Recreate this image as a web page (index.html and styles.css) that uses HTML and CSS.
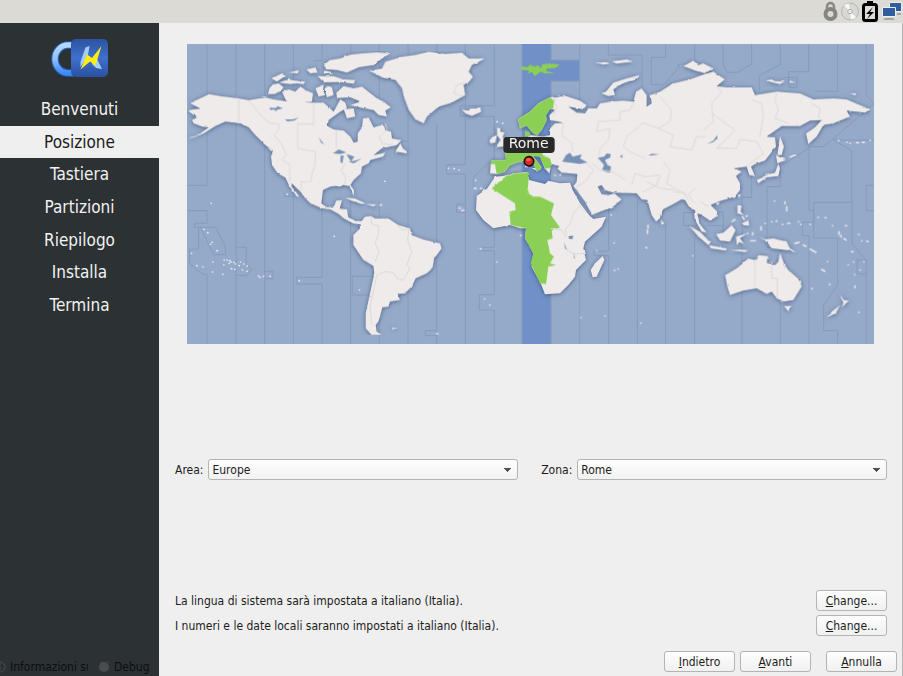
FILE: index.html
```html
<!DOCTYPE html>
<html lang="it">
<head>
<meta charset="utf-8">
<title>Posizione</title>
<link rel="stylesheet" href="styles.css">
</head>
<body>
<header class="panel">
  <svg class="tray" viewBox="0 0 80 23" aria-hidden="true">
    <path d="M5 10V6.500a3.500 3.500 0 0 1 7 0V10" fill="none" stroke="#898986" stroke-width="2.500"/>
    <circle cx="8.500" cy="14" r="5" fill="none" stroke="#858583" stroke-width="4"/>
    <circle cx="28" cy="11.500" r="8.500" fill="#d7d7d5" stroke="#b4b4b2"/>
    <path d="M28 11.500 22 5.500a8 8 0 0 1 5-2ZM28 11.500l6 6a8 8 0 0 1-5 2Z" fill="#f8f8f8"/>
    <circle cx="28" cy="11.500" r="2.200" fill="#eee" stroke="#aaa"/>
    <rect x="41.500" y="4.500" width="13" height="16" rx="2" fill="#dddcd5" stroke="#000" stroke-width="3"/>
    <path d="M45 1h6v4h-6z"/>
    <path d="m51 7-7 7h4l-3 5 7-7h-4z"/>
    <path d="M67.500 2.500h12v9h-12z" fill="#2f5d9f" stroke="#eee"/>
    <path d="M60.500 7.500h13v9h-13z" fill="#2f5d9f" stroke="#eee"/>
    <path d="M63 18h8l2 2H61zM75 13h4v2h-4z" fill="#a4a4a8"/>
  </svg>
</header>
<div class="window">
  <aside class="sidebar">
    <svg class="logo" viewBox="0 0 60 40" role="img" aria-label="Logo">
      <defs>
        <linearGradient id="ring" x2="0" y2="1"><stop stop-color="#b4d8ff"/><stop offset=".5" stop-color="#8fc1fb"/><stop offset="1" stop-color="#3c8cf5"/></linearGradient>
        <linearGradient id="tile" x2="0" y2="1"><stop stop-color="#2c539f"/><stop offset=".5" stop-color="#3e70cc"/><stop offset="1" stop-color="#2b50a0"/></linearGradient>
      </defs>
      <path d="M24 7h-6a13 14 0 0 0 0 28h6" fill="none" stroke="#2a5cb8" stroke-width="7.500"/>
      <path d="M24 7h-6a13 14 0 0 0 0 28h6" fill="none" stroke="url(#ring)" stroke-width="5.500"/>
      <rect x="21" y="1" width="37" height="38" rx="5" fill="url(#tile)"/>
      <path d="M35.500 9.500 39.500 8 38 17 34 24l-3.500 5V24ZM43 20l3-1 6 12-6-1-4-4Z" fill="#a5cdf5"/>
      <path d="M51.500 8 42 20l-5-3.500L30.500 31.500 40 23.500 45.500 27.500Z" fill="#ffee14"/>
    </svg>
    <nav class="steps">
      <span>Benvenuti</span><span class="current" aria-current="step">Posizione</span><span>Tastiera</span><span>Partizioni</span><span>Riepilogo</span><span>Installa</span><span>Termina</span>
    </nav>
    <div class="sidebar-foot">
      <button class="info"><svg viewBox="0 0 12 12" aria-hidden="true"><circle cx="6" cy="6" r="5" fill="none" stroke="#4a4e50"/><path d="M6 5v4M6 2v2" stroke="#4a4e50"/></svg><span>Informazioni su</span></button>
      <button class="debug"><svg viewBox="0 0 12 12" aria-hidden="true"><circle cx="6" cy="6" r="5" fill="#4b4b4b"/><path d="M2 2h2M9 1h2" stroke="#4b4b4b"/></svg><span>Debug</span></button>
    </div>
  </aside>
  <main class="page">
    <div class="map-area">
    <svg class="map" viewBox="0 0 2061 900" role="img" aria-label="Mappa dei fusi orari">
      <defs>
        <filter id="coast" x="0" y="0" width="100%" height="100%" color-interpolation-filters="sRGB">
          <feTurbulence type="fractalNoise" baseFrequency=".06" numOctaves="1" seed="4" result="n"/>
          <feDisplacementMap in="SourceGraphic" in2="n" scale="7" xChannelSelector="R" yChannelSelector="G"/>
        </filter>
        <filter id="shade" x="0" y="0" width="100%" height="100%" color-interpolation-filters="sRGB">
          <feDropShadow dx="0" dy="2" stdDeviation="6" flood-color="#1e355f" flood-opacity=".65"/>
        </filter>
      </defs>
      <path d="M0 0h2061v900H0z" fill="#95a9c9"/>
      <path d="M1005 0h87v48h86v63h-86v789h-87z" fill="#7090c7"/>
      <g class="zones">
        <path d="M60 0V424H0M0 500H60V538H23V550H86L115 608V632H80L40 550M35 550V615H8V658L48 691H60V900M147 0V900M147 610H178V660L194 675 180 694H147M233 0V900M233 682H258V704H233M319 0V900M293 446V457H319M405 50V0M380 50H405M405 438V700H328V720H405V900M491 0V60M491 470V900M491 697H560V753H496V697M577 0V190M577 470V560M577 770V900M663 0V900M663 292H643M749 0V120M749 240V900M749 860H715V875H749M835 0V362H779V390H835V900M835 505H808V481H835M922 0V185H820V217H922V610H878V620H922V752H877V798H922V900M922 217V340L859 400V438M1005 0V900M1092 0V48H1178V111H1092V170M1092 745V900M1178 0V200M1178 690V900M1265 490V621H1221V635H1265V900M1264 0V33H1365V150M1393 122V40H1436V0M1393 122H1430L1475 72V60H1523V0M1351 470V900M1436 545V900M1523 580V900M1608 0V60L1620 85H1652L1694 60V0M1780 0V62L1717 95V145M1865 0V83H1805V130H1830V100H1790M1952 0V142H1885M2038 0V155L2061 180L1910 308H1870M1870 308L1785 365M1780 365V428H1740V610H1780V900M1866 300V500M1866 500H1880V535H1846V575H1866V900M1940 288L1994 320V475H1880V582H1952V723L1910 783V860H1952V900M1995 475V600L2038 648V900M2061 424H2038V500H2061M2038 648H2010V690H2038M1694 305V460H1665V900M1490 506H1530V545H1490ZM1555 504H1609V545H1560M1609 540V580M1940 288H2061"/>
      </g>
      <g filter="url(#shade)"><g class="land" filter="url(#coast)">
        <g transform="translate(0 -12)">
          <path d="M4 212 20 208 40 206 10 190 28 180 66 162 100 168 150 174 185 180 235 172 260 178 300 184 330 186 380 188 410 188 440 215 460 178 475 188 480 204 460 215 425 240 422 258 440 268 470 272 490 290 500 308 512 305 512 280 525 262 528 235 545 233 560 262 590 253 595 270 612 275 615 295 643 300 630 315 585 325 560 345 595 338 588 350 550 360 545 370 525 380 522 400 500 420 490 435 501 450 500 468 488 438 470 435 430 440 408 450 403 490 420 502 440 500 448 482 465 480 458 506 480 508 484 532 505 542 530 545 528 555 498 550 470 535 455 522 430 508 405 505 370 490 355 475 340 455 314 430 312 437 337 470 330 470 308 440 295 413 272 400 255 375 252 350 258 330 235 315 205 285 185 262 160 250 115 245 85 258 50 280 20 292 0 299 40 280 65 262 45 260 20 250 15 240 30 232 10 218Z"/>
          <path d="M247 145 258 133 275 130 290 142 280 155 262 162 243 162ZM285 155 305 148 325 155 340 140 360 152 378 160 375 185 345 188 330 192 305 190 295 178ZM253 115 285 100 298 105 280 118 270 125ZM275 128 305 118 325 122 355 125 350 132 330 130 310 132ZM305 98 335 90 333 100ZM358 88 385 82 392 98 370 100ZM385 145 410 134 408 150 415 165 395 170ZM410 75 428 60 460 55 490 44 525 40 570 37 610 40 585 56 560 75 515 82 480 98 450 90 420 88ZM392 108 440 108 470 118 505 120 500 131 460 126 410 127ZM412 92 430 95 435 103 410 100ZM412 145 425 138 435 142 440 165 420 172ZM448 158 470 138 500 145 525 140 570 175 590 185 612 202 595 212 600 230 575 225 560 210 530 205 490 195 520 185 490 172 450 174ZM470 207 500 205 505 230 480 235ZM625 335 640 310 648 325 660 335 658 340ZM240 320 260 330 252 333Z"/>
        </g>
        <g transform="translate(525 -12)">
          <path d="M22 92 60 85 70 65 120 50 160 45 200 35 250 42 300 38 320 55 368 55 350 66 330 75 320 95 333 110 322 125 305 135 310 165 270 188 230 200 195 230 185 250 160 238 140 210 125 170 120 145 100 120 60 112ZM300 208 320 212 325 205 355 205 358 215 330 228 310 220ZM405 262 415 265 415 275 428 277 422 290 435 318 400 322 415 300 405 285ZM382 300 392 290 405 285 400 308 385 310Z"/>
        </g>
        <g transform="translate(1029 -12)">
          <path d="M-117 362-72 360-75 335-55 322-20 300 0 285 40 290 60 285 60 265 75 250 100 248 60 240 58 225 75 210 60 205 48 225 50 240 35 270 22 285 10 280-10 257-30 264-36 238 0 215 25 190 60 172 100 165 150 182 170 195 160 208 115 200 140 218 165 220 175 205 200 205 210 190 240 185 280 182 310 185 318 155 335 145 350 165 350 200 365 190 362 165 390 155 430 130 480 118 515 105 550 95 585 118 560 138 590 142 665 142 675 165 740 155 810 160 850 178 910 175 950 178 990 195 1023 208 1005 218 950 212 960 230 910 250 880 255 860 290 835 312 828 280 855 262 875 240 840 242 810 258 755 258 710 290 735 292 738 320 705 362 675 372 663 380 675 408 658 405 650 380 615 385 635 395 618 408 630 430 630 450 615 470 565 485 542 495 562 515 560 530 540 542 515 525 502 520 508 550 530 578 515 575 498 545 495 510 480 505 465 480 455 478 430 492 395 510 390 535 378 545 365 525 352 480 335 478 320 460 250 458 225 450 215 435 203 440 215 462 235 465 253 460 275 478 250 500 185 525 165 485 130 440 140 425 142 402 95 398 82 386 88 378 65 372 58 400 44 385 30 350 8 347 35 382 20 395 10 370-15 362-40 368-60 375-75 395-100 402-120 400Z"/>
          <path d="M214 160 228 155 250 128 290 115 328 105 325 113 280 130 250 148 255 165 235 168ZM460 78 490 62 505 75 520 70 550 85 525 100 495 92ZM195 68 230 66 240 71 220 74ZM245 64 290 58 310 65 260 71ZM710 122 725 118 735 123 765 125 750 132 730 128ZM780 122 798 128 778 128ZM960 160 980 160 975 166Z"/>
        </g>
        <g transform="translate(1539 -12)"><path d="M170 420 205 402 225 398 235 372 240 385 235 408 200 412 175 430ZM228 345 258 360 232 370ZM240 288 252 320 245 345 232 345Z"/></g>
        <g transform="translate(474 438)"><path d="M44 100 60 80 78 78 90 85 130 85 160 105 195 115 200 135 235 148 285 160 290 175 268 205 262 235 245 250 212 265 200 290 180 310 158 312 165 330 135 335 130 350 112 352 105 380 100 395 92 405 95 425 112 435 80 435 62 415 62 370 75 310 88 250 85 228 55 210 25 165 25 135 45 115ZM0 23 30 25 62 40 50 42 20 32ZM65 42 95 43 85 49ZM142 412 160 415 142 417Z"/></g>
        <g transform="translate(849 348)"><path d="M20 108 52 85 75 50 100 48 130 40 172 36 178 60 225 72 235 62 270 70 300 68 308 90 330 130 360 168 370 177 408 170 395 200 345 245 340 265 348 300 318 330 315 350 295 375 270 400 225 403 212 370 185 320 190 280 165 235 168 205 150 205 120 195 70 205 40 180 18 150ZM398 288 403 300 380 350 368 352 362 330 375 310ZM165 12 174 12 174 22 165 22ZM185 24 205 24 202 34Z"/></g>
        <g transform="translate(1359 408)"><path d="M255 285 290 265 325 235 345 240 355 225 385 228 380 245 405 255 415 245 420 218 432 250 445 270 480 300 485 320 460 360 430 365 410 355 395 335 380 342 350 325 310 332 270 345 262 320ZM432 378 455 378 445 394ZM598 343 612 360 627 362 605 382 610 368ZM600 376 587 400 560 412 575 395ZM355 168 375 178 400 175 440 185 450 205 468 217 440 210 395 205 380 185ZM228 162 250 158 275 135 287 150 270 185 240 182ZM148 138 180 155 212 188 205 195 175 170ZM208 195 260 205 258 212 212 205ZM288 170 322 160 300 174 312 192 298 186 290 196ZM292 75 305 77 302 95 312 106 292 100ZM305 130 325 120 328 137 312 136ZM62 118 73 130 65 137ZM294 43 302 43 296 56ZM227 68 240 66 233 76ZM270 210 300 209 325 210 315 216Z"/></g>
      </g></g>
      <g class="local" filter="url(#coast)">
        <g transform="translate(1029 -12)">
          <path d="M-117 362-72 360-75 340-55 332-20 300 36 290 38 345 60 355 65 372 63 385 44 385 30 350 8 347 35 382 20 395 10 370-15 362-40 368-60 375-75 395-100 402-105 372-117 372ZM-36 238 0 215 25 190 60 172 72 182 70 205 60 208 48 225 50 240 35 270 22 285 10 280-10 257-30 264ZM-15 272 0 277 0 288-15 290Z"/>
          <path d="M0 74 14 80 24 76 34 84 36 74 60 70 90 74 75 84 50 86 48 93 76 100 44 100 32 95 14 108 6 96-8 100-2 92-28 88-24 78-8 82Z"/>
        </g>
        <path transform="translate(849 348)" d="M65 85 108 48 130 40 178 38 172 98 190 110 210 110 252 130 243 165 270 203 245 210 248 235 232 240 240 280 252 290 240 310 258 315 235 320 228 372 210 370 182 310 190 280 165 235 168 205 122 195 118 155 137 150 135 130Z"/>
      </g>
      <g class="water">
        <g transform="translate(0 -12)"><path d="M248 203 268 204 270 198 288 205 272 209 265 214 262 208 250 210ZM295 238 318 238 335 232 322 242 300 244ZM395 292 412 314 402 308ZM438 340 455 328 478 337 460 342ZM461 347 470 347 466 371 460 365ZM478 342 502 350 492 365ZM485 365 505 362 525 355 500 370Z"/></g>
        <g transform="translate(1029 -12)"><path d="M97 365 108 345 120 338 128 350 155 343 150 355 172 367 150 372 122 368ZM203 353 222 350 230 340 242 342 240 353 225 360 232 375 243 380 240 398 228 396 216 390 222 375ZM270 348 278 345 276 355ZM355 347 365 341 388 343 365 346ZM126 436 140 450 155 475 185 520 175 520 145 470Z"/></g>
        <path transform="translate(849 348)" d="M296 228 310 227 307 238 297 237ZM281 245 291 269 286 266ZM311 275 315 296 312 294Z"/>
        <path transform="translate(1539 -12)" d="M22 311 40 302 52 285 52 296 38 307Z"/>
      </g>
      <g class="borders">
        <path transform="translate(0 -12)" d="M155 175V250M185 182 205 205 225 230 250 250 275 250 275 270 262 285 285 315 298 345 285 360 308 372V425M380 190V252H332V325L385 335V375L375 400 372 425H342V450M448 272V325M475 370 462 390 475 410V435"/>
        <path transform="translate(525 -12)" d="M70 250 75 270 52 290 60 310 95 315M310 128 285 135 275 160 305 170"/>
        <path transform="translate(1029 -12)" d="M72 172 80 205 70 225M100 250 95 285 125 310 128 335M312 185 300 210 270 215 270 240 205 245 200 275 240 265 235 300 210 325 208 345M390 170 425 210 420 245 385 265 340 248 290 290 280 320 300 335 345 355M385 265 430 285 420 320 485 330 500 290 525 290M185 370 210 390 250 395 285 420M305 435 315 400 345 410 390 405 380 435 340 455M400 365 420 390 410 430 470 465M170 370 190 390 165 425 135 445M560 140 575 155 545 190 550 245 520 270M545 220 615 270 560 325 620 325 630 298 680 305 700 340 650 380M665 180 695 190 700 225 690 290M740 158 735 180 745 210 735 235 775 250M845 190 870 205 865 235"/>
        <path transform="translate(474 438)" d="M78 85 80 102 102 108 100 135 90 158 102 185 90 215M155 105 175 120 192 118 188 150 200 185 185 225 195 235 175 270 158 268 145 248 120 245 95 255 88 290 75 350 80 405"/>
        <path transform="translate(849 348)" d="M330 135 310 160 300 190 285 210 290 225M325 135 360 170M242 205 275 210 290 235M290 270 312 282 345 280"/>
        <path transform="translate(1359 408)" d="M344 240V324M395 245V295H412V355M100 35 130 38 145 60M165 25 145 45 160 65M20 5 60 25 105 30M180 65 205 80"/>
      </g>
      <g class="specks">
        <path transform="translate(0 438)" d="M72 40h1M50 118h1M62 128h1M75 157h1M70 163h1M90 182h1M13 190h1M29 227h1M47 231h1M77 216h1M76 246h1M107 253h1M111 210h1M120 210h1M128 212h1M132 216h1M140 217h1M126 220h1M110 225h1M145 222h1M160 216h1M156 227h1M170 222h1M180 228h1M133 236h1M143 238h1M166 240h1M180 244h1M214 258h1M219 262h1M229 259h1M249 259h1M336 272h1M441 139h1M517 300h1M300 13h1"/>
        <path transform="translate(849 348)" d="M16 61h1M12 85h6M31 85h4M152 226h1M31 266h1M80 306h1M43 417h1M59 435h1M380 272h1M432 249h1M433 331h1M444 327h1M332 473h1M405 468h1M512 489h1M423 165h1M529 263h1M255 46h1M270 45h1"/>
        <path transform="translate(1359 408)" d="M24 136v8M22 150v10M18 203h1M158 227h1M403 63h1M435 65v6M440 80v12M363 140v10M375 130h1M395 125h1M408 123h3M427 133h1M443 130h6M475 125h1M482 133h1M510 133h1M534 112h1M555 113h3M577 137h1M616 137h4M597 155v8M603 166v5M612 176l6 4M656 163h1M665 183h1M680 184h4M634 215h6M624 254h1M640 246h1M660 270h1M671 245h1M643 284h1M645 318v5M656 397h1M568 313h1M515 325h1M545 268l10 6M562 245h1M465 190l12-3M490 195l8 4M510 207l18 10M332 182h14M322 160h1M285 118l-8 6M307 110l6 8M318 108h4M338 158v6"/>
        <path transform="translate(1539 -12)" d="M415 302h1M440 307h1M450 310h1M470 308h5M487 307h6M510 301h1M270 351l16-6"/>
        <path transform="translate(525 -12)" d="M259 385h1M276 386h1M291 390h1M68 424h1M405 245h1M422 250h1"/>
        <path transform="translate(474 438)" d="M342 54h4M350 61h6M406 176h1M275 431h4M105 45h5"/>
      </g>
      <g>
        <rect x="949" y="279" width="154" height="48" rx="11" fill="#292929"/>
        <text x="1025" y="312" text-anchor="middle" class="pin-label">Rome</text>
        <circle cx="1026" cy="352" r="14" fill="#e22624" stroke="#111" stroke-width="5"/>
        <ellipse cx="1024" cy="347" rx="7" ry="5" fill="#ff5a50"/>
      </g>
    </svg>
    </div>
    <form class="pickers">
      <label for="area">Area:</label>
      <select id="area"><option>Europe</option></select>
      <label for="zone" class="zone-label">Zona:</label>
      <select id="zone"><option>Rome</option></select>
    </form>
    <section class="locale">
      <div class="row"><p>La lingua di sistema sarà impostata a italiano (Italia).</p><button><u>C</u>hange...</button></div>
      <div class="row"><p>I numeri e le date locali saranno impostati a italiano (Italia).</p><button><u>C</u>hange...</button></div>
    </section>
    <footer class="actions"><button><u>I</u>ndietro</button><button><u>A</u>vanti</button><button class="cancel"><u>A</u>nnulla</button></footer>
  </main>
</div>
</body>
</html>
```
FILE: styles.css
```css
* { box-sizing: border-box; }
body {
  margin: 0;
  height: 100vh;
  display: flex;
  flex-direction: column;
  overflow: hidden;
  background: #efefef;
  color: #1c1c1c;
  font: 12px/14px "DejaVu Sans Condensed", "DejaVu Sans", sans-serif;
}
.panel {
  height: 23px;
  display: flex;
  justify-content: flex-end;
  background: #dbdad4;
}
.tray { width: 80px; height: 23px; margin-right: 1px; }
.window { flex: 1; display: flex; min-height: 0; border-right: 1px solid #b4b4b4; }
.sidebar {
  width: 159px;
  display: flex;
  flex-direction: column;
  background: #2c3133;
}
.logo { width: 60px; height: 40px; margin: 15px auto; flex: none; }
.steps {
  display: grid;
  grid-template-rows: repeat(7, 1fr);
  height: 228px;
  color: #f2f2f2;
  font-size: 17px;
  text-align: center;
}
.steps span { display: grid; place-items: center; }
.steps .current { background: #efefef; color: #1c1c1c; }
.sidebar-foot {
  display: flex;
  gap: 10px;
  margin-top: auto;
  padding-bottom: 2px;
}
.sidebar-foot button {
  display: flex;
  align-items: center;
  gap: 4px;
  padding: 0;
  border: 0;
  background: none;
  color: #0c0e0f;
  font: inherit;
  white-space: nowrap;
}
.sidebar-foot svg { width: 12px; height: 12px; flex: none; }
.info { width: 88px; overflow: hidden; }
.info svg { margin-left: -6px; }
.page {
  flex: 1;
  min-width: 0;
  display: flex;
  flex-direction: column;
  padding: 21px 5px 4px 16px;
}
.map-area { flex: 1; padding: 0 23px 0 12px; }
.map { display: block; width: 100%; }
.zones { fill: none; stroke: #869abe; stroke-width: 3; }
.land { fill: #eeebea; }
.local { fill: #8bcf55; }
.water { fill: #7890b6; }
.borders { fill: none; stroke: #dcd9d8; stroke-width: 3; }
.specks { fill: none; stroke: #e3e5ea; stroke-width: 5; stroke-linecap: round; }
.pin-label { fill: #f4f4f4; font: 42px "DejaVu Sans", sans-serif; }
.pickers {
  display: flex;
  align-items: center;
  gap: 5px;
  margin: 0 10px 110px 0;
}
.zone-label { margin-left: 18px; }
select {
  flex: 1;
  min-width: 0;
  height: 21px;
  padding: 0 3px;
  appearance: none;
  border: 1px solid #b4b4b4;
  border-radius: 3px;
  background:
    linear-gradient(to bottom right, #505050 50%, transparent 50%) right 5px center / 4px 4px no-repeat,
    linear-gradient(to bottom left, #505050 50%, transparent 50%) right 9px center / 4px 4px no-repeat,
    linear-gradient(#fefefe, #f2f2f2);
  color: inherit;
  font: inherit;
}
.locale { display: flex; flex-direction: column; gap: 4px; margin: 0 10px 15px 0; }
.row { display: flex; justify-content: space-between; align-items: center; }
.row p { margin: 0; }
.row button, .actions button {
  width: 71px;
  height: 21px;
  padding: 0;
  border: 1px solid #b4b4b4;
  border-radius: 3px;
  background: linear-gradient(#fefefe, #f0f0f0);
  color: inherit;
  font: inherit;
}
.actions { display: flex; justify-content: flex-end; gap: 5px; }
.actions .cancel { margin-left: 10px; }
```
